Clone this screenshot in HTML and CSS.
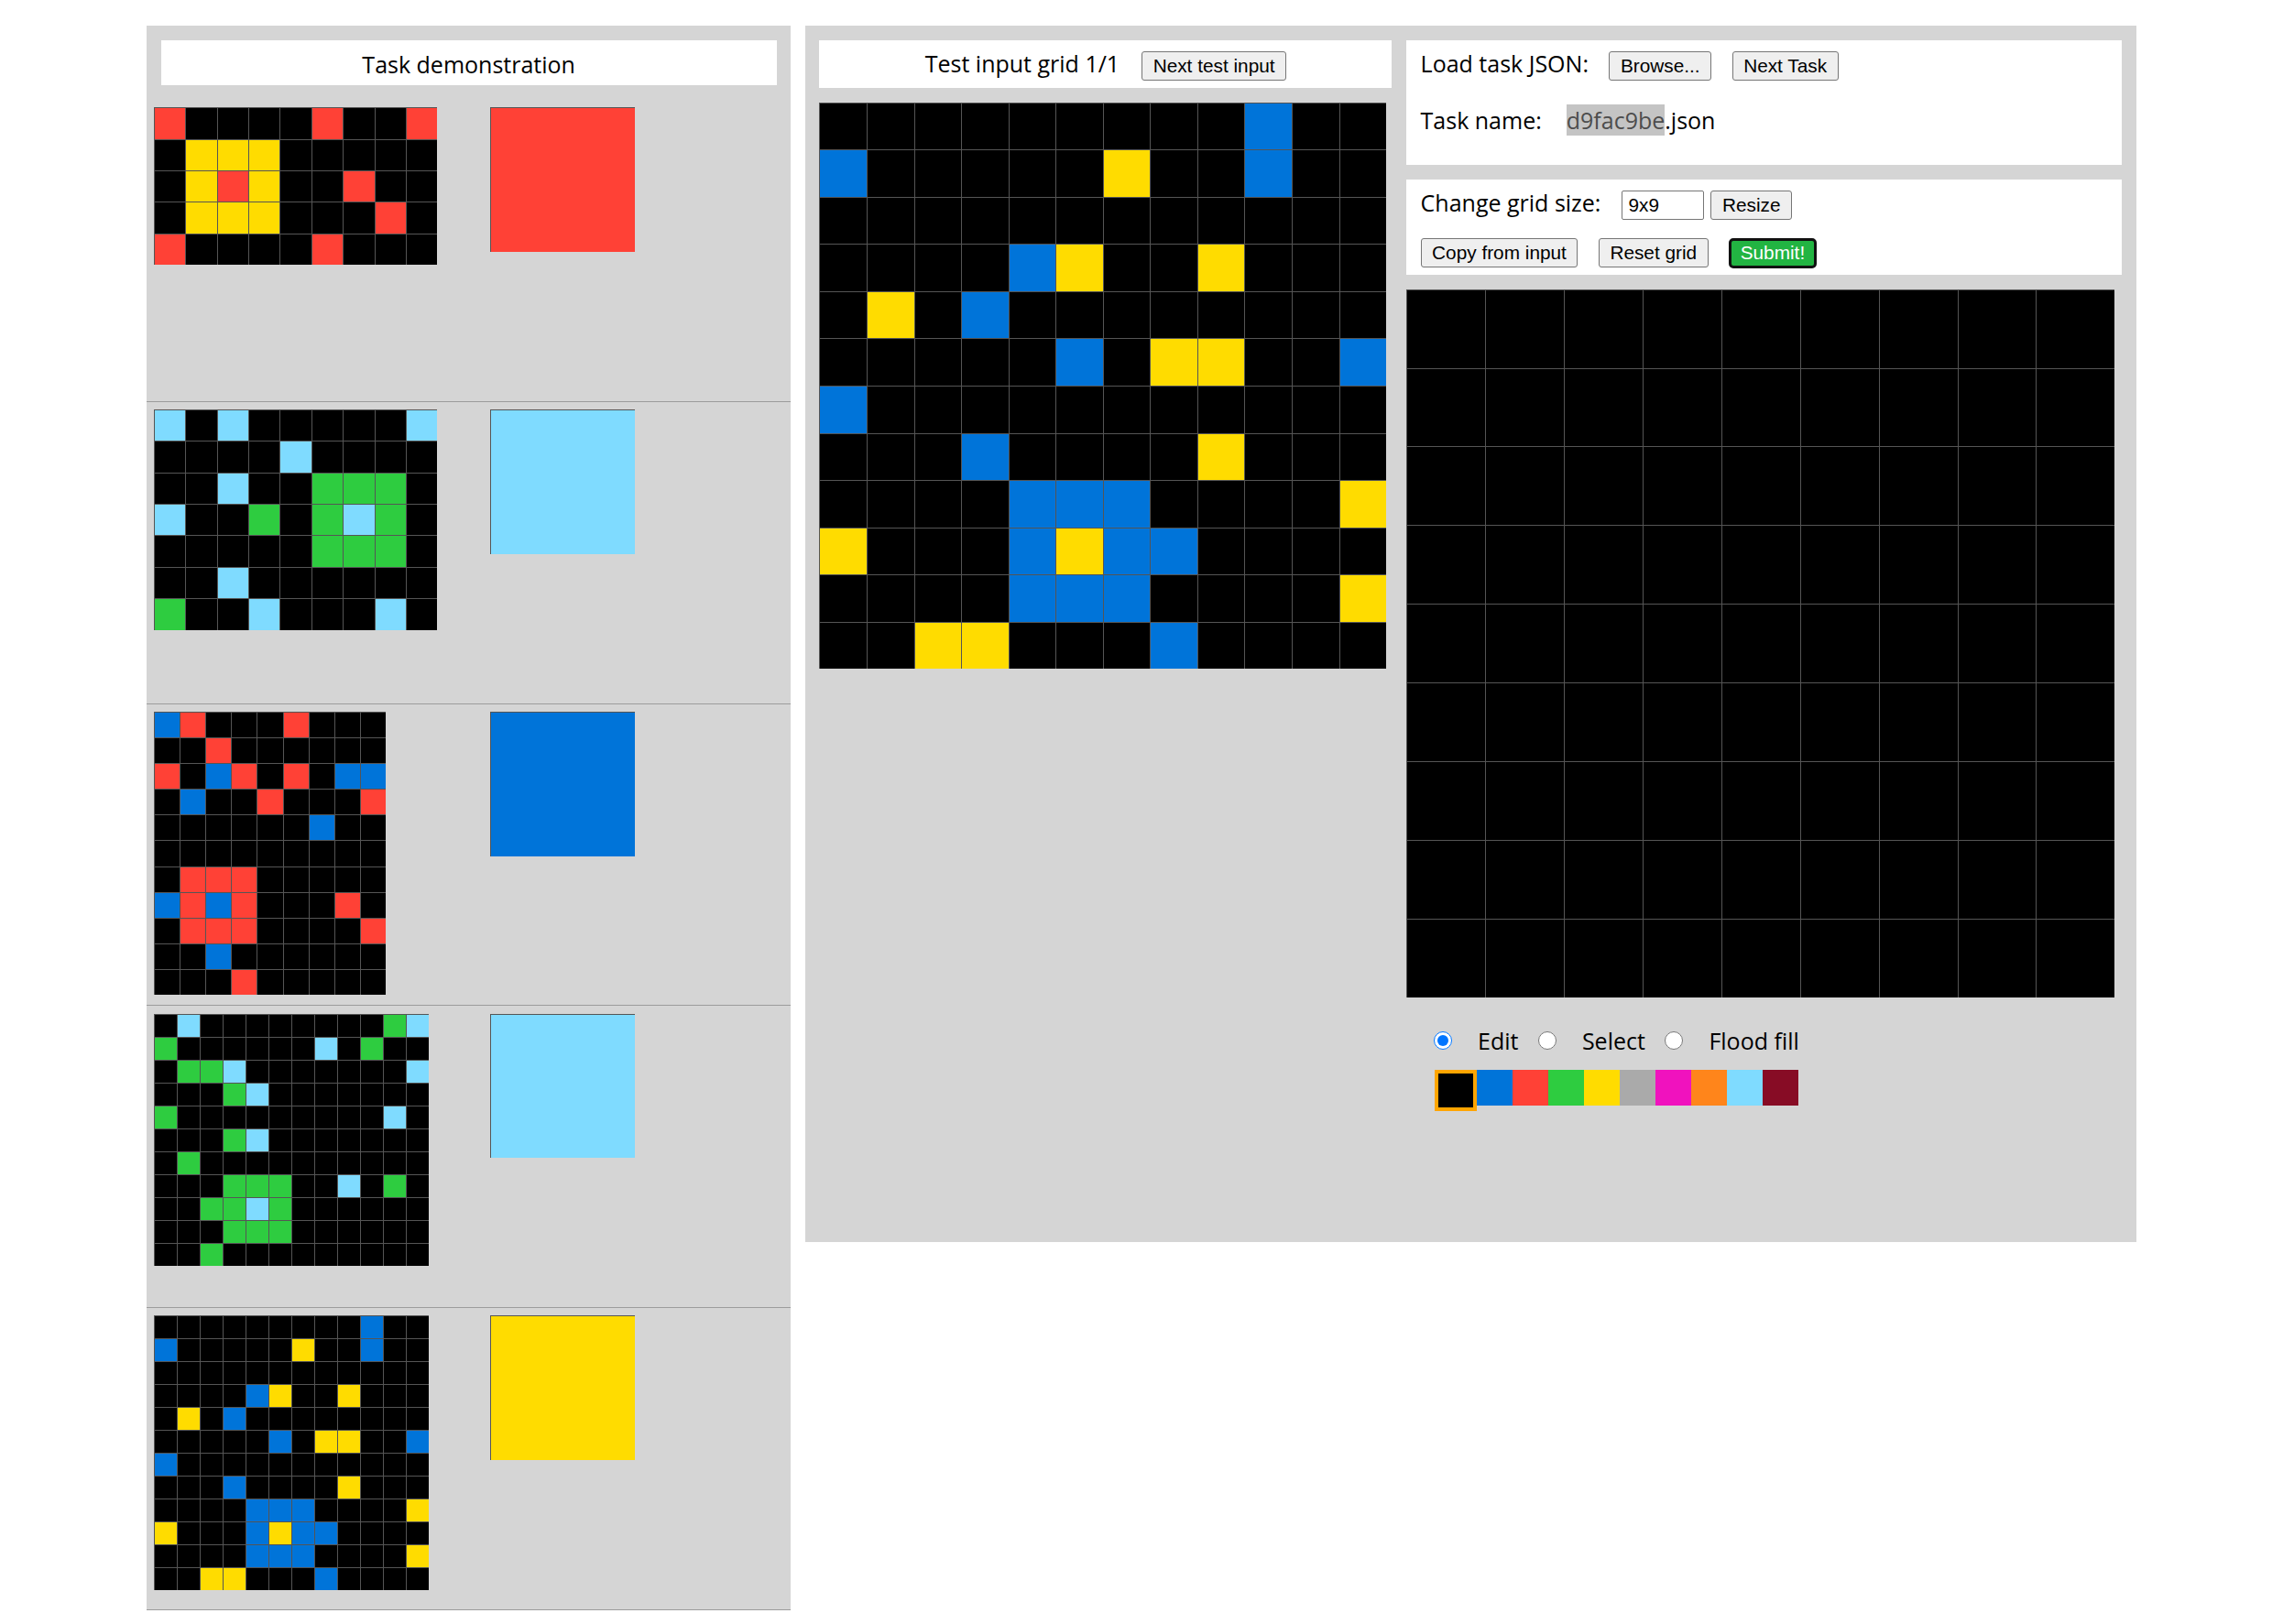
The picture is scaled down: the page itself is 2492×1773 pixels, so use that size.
FILE: index.html
```html
<!DOCTYPE html>
<html lang="en">
<head>
<meta charset="utf-8">
<title>ARC testing interface</title>
<link rel="stylesheet" href="styles.css">
</head>
<body>
<div class="page">
  <section class="demo-panel">
    <div class="demo-head">Task demonstration</div>

    <div class="pair">
      <div class="pair-in">
        <div class="grid p34 w9">
<i class="c2"></i><i></i><i></i><i></i><i></i><i class="c2"></i><i></i><i></i><i class="c2"></i>
<i></i><i class="c4"></i><i class="c4"></i><i class="c4"></i><i></i><i></i><i></i><i></i><i></i>
<i></i><i class="c4"></i><i class="c2"></i><i class="c4"></i><i></i><i></i><i class="c2"></i><i></i><i></i>
<i></i><i class="c4"></i><i class="c4"></i><i class="c4"></i><i></i><i></i><i></i><i class="c2"></i><i></i>
<i class="c2"></i><i></i><i></i><i></i><i></i><i class="c2"></i><i></i><i></i><i></i>
        </div>
      </div>
      <div class="pair-out"><div class="grid p158 w1"><i class="c2"></i></div></div>
    </div>

    <div class="pair">
      <div class="pair-in">
        <div class="grid p34 w9">
<i class="c8"></i><i></i><i class="c8"></i><i></i><i></i><i></i><i></i><i></i><i class="c8"></i>
<i></i><i></i><i></i><i></i><i class="c8"></i><i></i><i></i><i></i><i></i>
<i></i><i></i><i class="c8"></i><i></i><i></i><i class="c3"></i><i class="c3"></i><i class="c3"></i><i></i>
<i class="c8"></i><i></i><i></i><i class="c3"></i><i></i><i class="c3"></i><i class="c8"></i><i class="c3"></i><i></i>
<i></i><i></i><i></i><i></i><i></i><i class="c3"></i><i class="c3"></i><i class="c3"></i><i></i>
<i></i><i></i><i class="c8"></i><i></i><i></i><i></i><i></i><i></i><i></i>
<i class="c3"></i><i></i><i></i><i class="c8"></i><i></i><i></i><i></i><i class="c8"></i><i></i>
        </div>
      </div>
      <div class="pair-out"><div class="grid p158 w1"><i class="c8"></i></div></div>
    </div>

    <div class="pair">
      <div class="pair-in">
        <div class="grid p28 w9">
<i class="c1"></i><i class="c2"></i><i></i><i></i><i></i><i class="c2"></i><i></i><i></i><i></i>
<i></i><i></i><i class="c2"></i><i></i><i></i><i></i><i></i><i></i><i></i>
<i class="c2"></i><i></i><i class="c1"></i><i class="c2"></i><i></i><i class="c2"></i><i></i><i class="c1"></i><i class="c1"></i>
<i></i><i class="c1"></i><i></i><i></i><i class="c2"></i><i></i><i></i><i></i><i class="c2"></i>
<i></i><i></i><i></i><i></i><i></i><i></i><i class="c1"></i><i></i><i></i>
<i></i><i></i><i></i><i></i><i></i><i></i><i></i><i></i><i></i>
<i></i><i class="c2"></i><i class="c2"></i><i class="c2"></i><i></i><i></i><i></i><i></i><i></i>
<i class="c1"></i><i class="c2"></i><i class="c1"></i><i class="c2"></i><i></i><i></i><i></i><i class="c2"></i><i></i>
<i></i><i class="c2"></i><i class="c2"></i><i class="c2"></i><i></i><i></i><i></i><i></i><i class="c2"></i>
<i></i><i></i><i class="c1"></i><i></i><i></i><i></i><i></i><i></i><i></i>
<i></i><i></i><i></i><i class="c2"></i><i></i><i></i><i></i><i></i><i></i>
        </div>
      </div>
      <div class="pair-out"><div class="grid p158 w1"><i class="c1"></i></div></div>
    </div>

    <div class="pair">
      <div class="pair-in">
        <div class="grid p25 w12">
<i></i><i class="c8"></i><i></i><i></i><i></i><i></i><i></i><i></i><i></i><i></i><i class="c3"></i><i class="c8"></i>
<i class="c3"></i><i></i><i></i><i></i><i></i><i></i><i></i><i class="c8"></i><i></i><i class="c3"></i><i></i><i></i>
<i></i><i class="c3"></i><i class="c3"></i><i class="c8"></i><i></i><i></i><i></i><i></i><i></i><i></i><i></i><i class="c8"></i>
<i></i><i></i><i></i><i class="c3"></i><i class="c8"></i><i></i><i></i><i></i><i></i><i></i><i></i><i></i>
<i class="c3"></i><i></i><i></i><i></i><i></i><i></i><i></i><i></i><i></i><i></i><i class="c8"></i><i></i>
<i></i><i></i><i></i><i class="c3"></i><i class="c8"></i><i></i><i></i><i></i><i></i><i></i><i></i><i></i>
<i></i><i class="c3"></i><i></i><i></i><i></i><i></i><i></i><i></i><i></i><i></i><i></i><i></i>
<i></i><i></i><i></i><i class="c3"></i><i class="c3"></i><i class="c3"></i><i></i><i></i><i class="c8"></i><i></i><i class="c3"></i><i></i>
<i></i><i></i><i class="c3"></i><i class="c3"></i><i class="c8"></i><i class="c3"></i><i></i><i></i><i></i><i></i><i></i><i></i>
<i></i><i></i><i></i><i class="c3"></i><i class="c3"></i><i class="c3"></i><i></i><i></i><i></i><i></i><i></i><i></i>
<i></i><i></i><i class="c3"></i><i></i><i></i><i></i><i></i><i></i><i></i><i></i><i></i><i></i>
        </div>
      </div>
      <div class="pair-out"><div class="grid p158 w1"><i class="c8"></i></div></div>
    </div>

    <div class="pair">
      <div class="pair-in">
        <div class="grid p25 w12">
<i></i><i></i><i></i><i></i><i></i><i></i><i></i><i></i><i></i><i class="c1"></i><i></i><i></i>
<i class="c1"></i><i></i><i></i><i></i><i></i><i></i><i class="c4"></i><i></i><i></i><i class="c1"></i><i></i><i></i>
<i></i><i></i><i></i><i></i><i></i><i></i><i></i><i></i><i></i><i></i><i></i><i></i>
<i></i><i></i><i></i><i></i><i class="c1"></i><i class="c4"></i><i></i><i></i><i class="c4"></i><i></i><i></i><i></i>
<i></i><i class="c4"></i><i></i><i class="c1"></i><i></i><i></i><i></i><i></i><i></i><i></i><i></i><i></i>
<i></i><i></i><i></i><i></i><i></i><i class="c1"></i><i></i><i class="c4"></i><i class="c4"></i><i></i><i></i><i class="c1"></i>
<i class="c1"></i><i></i><i></i><i></i><i></i><i></i><i></i><i></i><i></i><i></i><i></i><i></i>
<i></i><i></i><i></i><i class="c1"></i><i></i><i></i><i></i><i></i><i class="c4"></i><i></i><i></i><i></i>
<i></i><i></i><i></i><i></i><i class="c1"></i><i class="c1"></i><i class="c1"></i><i></i><i></i><i></i><i></i><i class="c4"></i>
<i class="c4"></i><i></i><i></i><i></i><i class="c1"></i><i class="c4"></i><i class="c1"></i><i class="c1"></i><i></i><i></i><i></i><i></i>
<i></i><i></i><i></i><i></i><i class="c1"></i><i class="c1"></i><i class="c1"></i><i></i><i></i><i></i><i></i><i class="c4"></i>
<i></i><i></i><i class="c4"></i><i class="c4"></i><i></i><i></i><i></i><i class="c1"></i><i></i><i></i><i></i><i></i>
        </div>
      </div>
      <div class="pair-out"><div class="grid p158 w1"><i class="c4"></i></div></div>
    </div>
  </section>

  <section class="work-panel">
    <div class="test-col">
      <div class="test-head">
        <span>Test input grid 1/1</span>
        <button class="btn">Next test input</button>
      </div>
      <div class="grid p52 w12">
<i></i><i></i><i></i><i></i><i></i><i></i><i></i><i></i><i></i><i class="c1"></i><i></i><i></i>
<i class="c1"></i><i></i><i></i><i></i><i></i><i></i><i class="c4"></i><i></i><i></i><i class="c1"></i><i></i><i></i>
<i></i><i></i><i></i><i></i><i></i><i></i><i></i><i></i><i></i><i></i><i></i><i></i>
<i></i><i></i><i></i><i></i><i class="c1"></i><i class="c4"></i><i></i><i></i><i class="c4"></i><i></i><i></i><i></i>
<i></i><i class="c4"></i><i></i><i class="c1"></i><i></i><i></i><i></i><i></i><i></i><i></i><i></i><i></i>
<i></i><i></i><i></i><i></i><i></i><i class="c1"></i><i></i><i class="c4"></i><i class="c4"></i><i></i><i></i><i class="c1"></i>
<i class="c1"></i><i></i><i></i><i></i><i></i><i></i><i></i><i></i><i></i><i></i><i></i><i></i>
<i></i><i></i><i></i><i class="c1"></i><i></i><i></i><i></i><i></i><i class="c4"></i><i></i><i></i><i></i>
<i></i><i></i><i></i><i></i><i class="c1"></i><i class="c1"></i><i class="c1"></i><i></i><i></i><i></i><i></i><i class="c4"></i>
<i class="c4"></i><i></i><i></i><i></i><i class="c1"></i><i class="c4"></i><i class="c1"></i><i class="c1"></i><i></i><i></i><i></i><i></i>
<i></i><i></i><i></i><i></i><i class="c1"></i><i class="c1"></i><i class="c1"></i><i></i><i></i><i></i><i></i><i class="c4"></i>
<i></i><i></i><i class="c4"></i><i class="c4"></i><i></i><i></i><i></i><i class="c1"></i><i></i><i></i><i></i><i></i>
      </div>
    </div>

    <div class="edit-col">
      <div class="box load-box">
        <div class="row load-row">
          <span>Load task JSON:</span>
          <button class="btn">Browse...</button>
          <button class="btn">Next Task</button>
        </div>
        <div class="row name-row">
          <span>Task name:</span>
          <span class="task-name"><span class="hl">d9fac9be</span>.json</span>
        </div>
      </div>

      <div class="box size-box">
        <div class="row size-row">
          <span>Change grid size:</span>
          <input class="field" type="text" value="9x9">
          <button class="btn resize">Resize</button>
        </div>
        <div class="row action-row">
          <button class="btn">Copy from input</button>
          <button class="btn">Reset grid</button>
          <button class="btn submit">Submit!</button>
        </div>
      </div>

      <div class="grid p86 w9">
<i></i><i></i><i></i><i></i><i></i><i></i><i></i><i></i><i></i>
<i></i><i></i><i></i><i></i><i></i><i></i><i></i><i></i><i></i>
<i></i><i></i><i></i><i></i><i></i><i></i><i></i><i></i><i></i>
<i></i><i></i><i></i><i></i><i></i><i></i><i></i><i></i><i></i>
<i></i><i></i><i></i><i></i><i></i><i></i><i></i><i></i><i></i>
<i></i><i></i><i></i><i></i><i></i><i></i><i></i><i></i><i></i>
<i></i><i></i><i></i><i></i><i></i><i></i><i></i><i></i><i></i>
<i></i><i></i><i></i><i></i><i></i><i></i><i></i><i></i><i></i>
<i></i><i></i><i></i><i></i><i></i><i></i><i></i><i></i><i></i>
      </div>

      <div class="tools">
        <input type="radio" name="tool" id="t-edit" checked>
        <label for="t-edit">Edit</label>
        <input type="radio" name="tool" id="t-select">
        <label for="t-select">Select</label>
        <input type="radio" name="tool" id="t-fill">
        <label for="t-fill">Flood fill</label>
      </div>

      <div class="palette">
        <span class="swatch c0 selected"></span>
        <span class="swatch c1"></span>
        <span class="swatch c2"></span>
        <span class="swatch c3"></span>
        <span class="swatch c4"></span>
        <span class="swatch c5"></span>
        <span class="swatch c6"></span>
        <span class="swatch c7"></span>
        <span class="swatch c8"></span>
        <span class="swatch c9"></span>
      </div>
    </div>
  </section>
</div>
</body>
</html>
```

FILE: styles.css
```css
* {
  box-sizing: border-box;
}

body {
  margin: 0;
  background: #ffffff;
  color: #000000;
  font-family: "Open Sans", "Noto Sans", sans-serif;
  font-size: 25px;
  line-height: 34px;
}

.page {
  display: flex;
  justify-content: center;
  align-items: flex-start;
  gap: 15.6px;
  padding-top: 28px;
}

/* ---------- left: demonstration pairs ---------- */
.demo-panel {
  flex: none;
  width: 703.1px;
  background: #d5d5d5;
  padding-top: 15.6px;
}

.demo-head {
  height: 49px;
  margin: 0 15.6px 16.4px;
  padding-top: 9px;
  background: #ffffff;
  text-align: center;
}

.pair {
  display: flex;
  align-items: flex-start;
  height: 329.8px;
  padding: 8.2px 0 0 7.8px;
  border-bottom: 1px solid #9c9c9c;
}

.pair-in {
  flex: none;
  width: 367.2px;
}

/* ---------- grids ---------- */
.grid {
  display: grid;
  grid-auto-rows: var(--p);
  width: max-content;
}

.grid i {
  display: block;
  background: #000000;
  border-top: 1px solid #555555;
  border-left: 1px solid #555555;
}

.p25 { --p: 25px; }
.p28 { --p: 28.125px; }
.p34 { --p: 34.375px; }
.p52 { --p: 51.5625px; }
.p86 { --p: 85.9375px; }
.p158 { --p: 157.8px; }

.w1 { grid-template-columns: repeat(1, var(--p)); }
.w9 { grid-template-columns: repeat(9, var(--p)); }
.w12 { grid-template-columns: repeat(12, var(--p)); }

.c0, .grid i.c0 { background: #000000; }
.c1, .grid i.c1 { background: #0074d9; }
.c2, .grid i.c2 { background: #ff4136; }
.c3, .grid i.c3 { background: #2ecc40; }
.c4, .grid i.c4 { background: #ffdc00; }
.c5, .grid i.c5 { background: #aaaaaa; }
.c6, .grid i.c6 { background: #f012be; }
.c7, .grid i.c7 { background: #ff851b; }
.c8, .grid i.c8 { background: #7fdbff; }
.c9, .grid i.c9 { background: #870c25; }

/* ---------- right: work area ---------- */
.work-panel {
  flex: none;
  display: flex;
  align-items: flex-start;
  gap: 15.6px;
  width: 1453.1px;
  height: 1328px;
  padding: 15.6px;
  background: #d5d5d5;
}

.test-col {
  flex: none;
  width: 625px;
}

.test-head {
  display: flex;
  justify-content: center;
  align-items: baseline;
  gap: 24px;
  height: 52.4px;
  padding-top: 8.9px;
  margin-bottom: 15.6px;
  background: #ffffff;
}

.edit-col {
  flex: none;
  width: 781.25px;
}

.box {
  background: #ffffff;
  padding: 0 15.6px;
  margin-bottom: 15.6px;
}

.row {
  display: flex;
  align-items: baseline;
}

.load-box {
  height: 136.4px;
  padding-top: 8.9px;
}

.load-row {
  gap: 22.5px;
}

.name-row {
  margin-top: 25.5px;
}

.task-name {
  margin-left: 27px;
}

.hl {
  background: #c4c4c4;
  color: #4d4d4d;
}

.size-box {
  height: 104.4px;
  padding-top: 8.8px;
}

.size-row .field {
  margin-left: 23px;
}

.size-row .resize {
  margin-left: 7px;
}

.action-row {
  margin-top: 19.2px;
  gap: 22.5px;
}

.btn {
  margin: 0;
  padding: 3px 11.5px;
  font-family: "Liberation Sans", Arial, sans-serif;
  font-size: 20.8px;
  line-height: 24px;
  color: #000000;
  background: #efefef;
  border: 1px solid #767676;
  border-radius: 3px;
}

.btn.submit {
  padding: 1.5px 9.5px;
  color: #ffffff;
  background: #22b442;
  border: 3px solid #111111;
  border-radius: 5px;
}

.field {
  width: 90px;
  height: 32px;
  margin: 0;
  padding: 0 6px;
  font-family: "Liberation Sans", Arial, sans-serif;
  font-size: 20.8px;
  color: #000000;
  background: #ffffff;
  border: 1px solid #767676;
  border-radius: 2px;
}

.tools {
  display: flex;
  align-items: center;
  margin-top: 29.5px;
  padding-left: 30px;
}

.tools input {
  flex: none;
  width: 20px;
  height: 20px;
  margin: 0 28px 0 0;
}

.tools label {
  margin-right: 21.5px;
}

.palette {
  display: flex;
  align-items: flex-start;
  margin-top: 15.7px;
  padding-left: 31px;
}

.swatch {
  display: block;
  width: 39px;
  height: 39px;
}

.swatch.selected {
  width: 46px;
  height: 45px;
  border: 4px solid #ffa500;
}
```
